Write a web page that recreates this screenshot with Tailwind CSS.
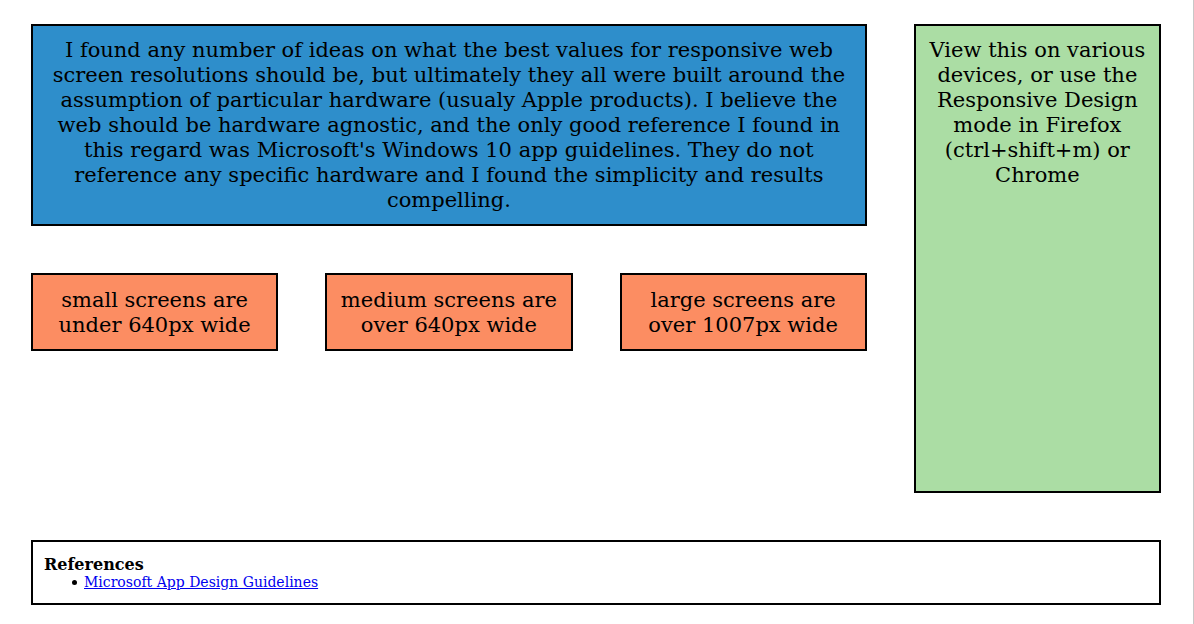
<!DOCTYPE html>
<html lang="en">
<head>
<meta charset="utf-8">
<meta name="viewport" content="width=device-width, initial-scale=1">
<title>Responsive Grid</title>
<script src="https://cdn.jsdelivr.net/npm/@tailwindcss/browser@4"></script>
</head>
<body class="min-h-screen bg-white font-['DejaVu_Serif',serif] text-black">
<div class="flex min-h-screen flex-col gap-[47px] border-r border-[#c8c8c8] pt-6 pr-8 pb-[19px] pl-[31px]">
  <div class="grid flex-1 grid-cols-4 gap-[47px] text-center text-[21px] leading-[25px]">
    <main class="col-span-3 flex flex-col gap-[47px]">
      <p class="border-2 border-black bg-[#2e8ecb] px-3 pt-3 pb-[11px]">I found any number of ideas on what the best values for responsive web screen resolutions should be, but ultimately they all were built around the assumption of particular hardware (usualy Apple products). I believe the web should be hardware agnostic, and the only good reference I found in this regard was Microsoft's Windows 10 app guidelines. They do not reference any specific hardware and I found the simplicity and results compelling.</p>
      <div class="grid grid-cols-3 gap-[47px]">
        <p class="border-2 border-black bg-[#fc8d62] px-3 pt-[13px] pb-[11px]">small screens are under 640px wide</p>
        <p class="border-2 border-black bg-[#fc8d62] px-3 pt-[13px] pb-[11px]">medium screens are over 640px wide</p>
        <p class="border-2 border-black bg-[#fc8d62] px-3 pt-[13px] pb-[11px]">large screens are over 1007px wide</p>
      </div>
    </main>
    <aside class="border-2 border-black bg-[#abdda4] px-3 py-3">View this on various devices, or use the Responsive Design mode in Firefox (ctrl+shift+m) or Chrome</aside>
  </div>
  <footer class="border-2 border-black px-[11px] pt-[14px] pb-[13px]">
    <h2 class="text-base leading-[18px] font-bold">References</h2>
    <ul class="pl-7 text-sm leading-4">
      <li class="flex items-center gap-[7px] before:size-[5px] before:rounded-full before:bg-black"><a href="#" class="text-[#0000ee] underline">Microsoft App Design Guidelines</a></li>
    </ul>
  </footer>
</div>
</body>
</html>
